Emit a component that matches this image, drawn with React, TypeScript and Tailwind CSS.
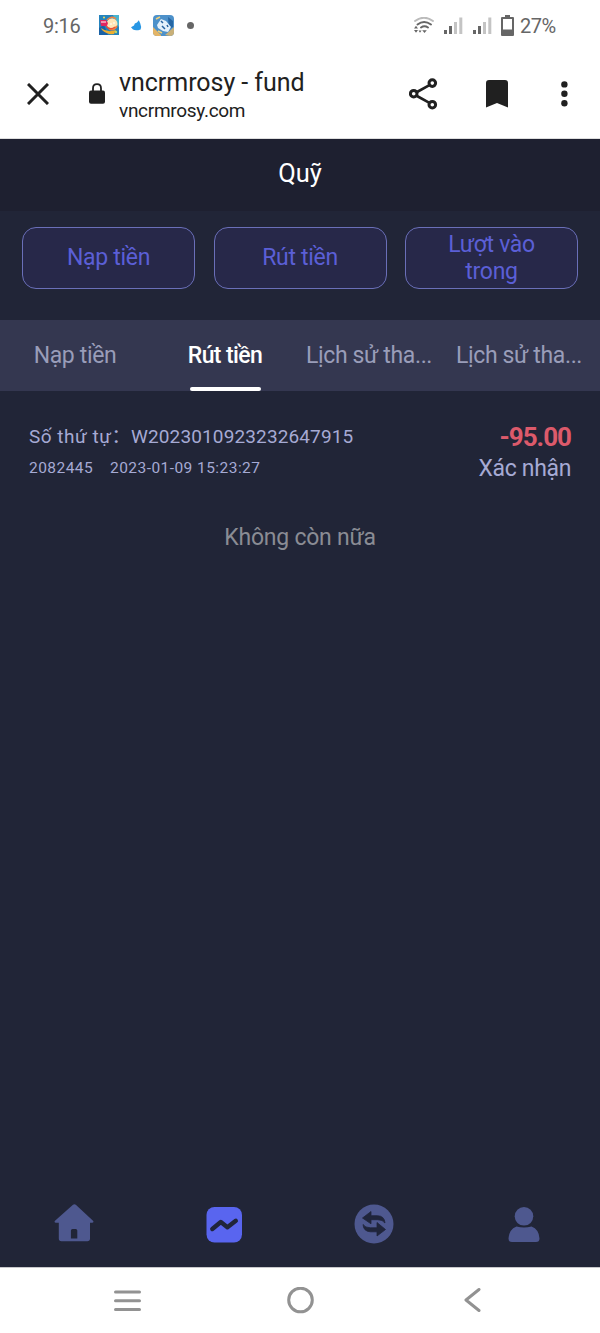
import React from 'react';

interface ActionButton {
  id: string;
  label: string;
}

interface Tab {
  id: string;
  label: string;
  active: boolean;
}

interface FundRecord {
  orderNo: string;
  userId: string;
  createdAt: string;
  amount: string;
  status: string;
}

const actions: ActionButton[] = [
  { id: 'deposit', label: 'Nạp tiền' },
  { id: 'withdraw', label: 'Rút tiền' },
  { id: 'transfer', label: 'Lượt vào trong' },
];

const tabs: Tab[] = [
  { id: 'deposit', label: 'Nạp tiền', active: false },
  { id: 'withdraw', label: 'Rút tiền', active: true },
  { id: 'history-in', label: 'Lịch sử tha...', active: false },
  { id: 'history-out', label: 'Lịch sử tha...', active: false },
];

const records: FundRecord[] = [
  {
    orderNo: 'W2023010923232647915',
    userId: '2082445',
    createdAt: '2023-01-09 15:23:27',
    amount: '-95.00',
    status: 'Xác nhận',
  },
];

const SignalIcon: React.FC = () => (
  <svg width="19" height="17" viewBox="0 0 19 17">
    <rect x="0" y="13" width="3" height="4" fill="#666" />
    <rect x="5" y="9" width="3" height="8" fill="#666" />
    <rect x="10" y="5" width="3" height="12" fill="#c4c4c4" />
    <rect x="15.3" y="0.5" width="3" height="16.5" fill="#c4c4c4" />
  </svg>
);

const StatusBar: React.FC = () => (
  <div className="flex h-[50px] shrink-0 items-center justify-between pr-[44px] pl-[43px] text-[20px] text-[#666]">
    <div className="flex items-center">
      <span className="w-[56px] pt-[2px] tracking-[-0.3px]">9:16</span>
      {/* puzzle game */}
      <svg width="20" height="20" viewBox="0 0 20 20">
        <rect width="20" height="20" fill="#2583bd" />
        <path d="M0 13 5 10 9 20H0Z" fill="#1a62a6" />
        <path d="M14 0h6v12l-4-5Z" fill="#48b4d0" />
        <path d="M2 13q6 5 15 2l-2 4q-7 1-12-4Z" fill="#edaf31" />
        <ellipse cx="13" cy="9" rx="5.5" ry="5.8" fill="#ffe6b5" />
        <path d="M8 5q5-5 9-1M10 14q5 2 8-3" stroke="#f2823d" strokeWidth="1.6" fill="none" />
        <path d="M1 5h6l2 3-1 3H2Z" fill="#e3265e" />
        <path d="M2 7h5M12 8v2m3-3v2" stroke="#fff" strokeWidth="1" />
        <path d="M7 11q4 5 9 1" stroke="#e8503b" strokeWidth="1.3" fill="none" />
        <circle cx="5" cy="2.5" r="1" fill="#f5dc57" />
        <circle cx="17" cy="17" r="1.2" fill="#b6d86c" />
      </svg>
      {/* bird */}
      <svg className="ml-[12px]" width="11" height="11" viewBox="0 0 11 11">
        <path d="M0 7.3 3 5.4 3.8 3.4 6 2.6 7.8 0.2 9.2 3.2Q10.8 7 9.6 9.4 5 11 2 9.6Z" fill="#2897e4" />
      </svg>
      {/* dragon game */}
      <svg className="ml-[11px]" width="21" height="21" viewBox="0 0 21 21">
        <rect width="21" height="21" rx="4" fill="#4d91ca" />
        <path d="M0 12 8 20v1H4q-4 0-4-4Z" fill="#e4b567" />
        <path d="M12 20 21 12v5q0 4-4 4Z" fill="#c9b078" />
        <path d="M15 2 20 6v6l-4 2Z" fill="#2766a3" />
        <path d="M4 10 8 4l5 2 5 6-3 5-5-1-5-3Z" fill="#e4f1fb" />
        <path d="m8 6 2 2m-1 3 3 3m2-4 1 2" stroke="#27639f" strokeWidth="1.5" />
        <path d="M3 4 7 2M5 16l4 2" stroke="#efcf78" strokeWidth="1.6" />
      </svg>
      <span className="ml-[13px] h-[7px] w-[7px] rounded-full bg-[#666]" />
    </div>
    <div className="flex items-center">
      <svg width="20" height="17" viewBox="0 0 20 17" fill="none" strokeLinecap="round">
        <path d="M1 4Q10-2.6 19 4" stroke="#bbb" strokeWidth="1.9" />
        <path d="M3.5 7.5Q10 2.5 17 7.5" stroke="#666" strokeWidth="2" />
        <path d="M7 10.5Q10.5 8 14 10.5" stroke="#666" strokeWidth="2" />
        <path d="m8.2 13.3h4.6L10.5 16Z" fill="#666" />
        <path d="M0 11.5 2 8.8l2 2.7ZM0 13h4l-2 2.7ZM4.6 13.5h3L6 15.7Z" fill="#666" />
      </svg>
      <span className="ml-[10px]">
        <SignalIcon />
      </span>
      <span className="ml-[10px]">
        <SignalIcon />
      </span>
      <svg className="ml-[9px]" width="13" height="21" viewBox="0 0 13 21">
        <path d="M4 0h5v2h3q1 0 1 1v17q0 1-1 1H1q-1 0-1-1V3q0-1 1-1h3ZM2 4v10.5h9V4Z" fill="#666" fillRule="evenodd" />
      </svg>
      <span className="ml-[6px] w-[36px] pt-[2px] tracking-[-0.5px] whitespace-nowrap">27%</span>
    </div>
  </div>
);

const BrowserBar: React.FC = () => (
  <div className="flex h-[89px] shrink-0 items-start border-b border-[#dedede] text-[#212121]">
    <svg className="mt-[33px] ml-[27px]" width="22" height="22" viewBox="0 0 22 22" stroke="#202020" strokeWidth="3">
      <path d="m1 1 20 20M21 1 1 21" />
    </svg>
    <svg className="mt-[33px] ml-[40px]" width="16" height="21" viewBox="0 0 16 21">
      <path d="M4 9V5.2Q4 1.2 8 1.2t4 4V9" fill="none" stroke="#212121" strokeWidth="1.8" />
      <rect y="7.6" width="16" height="13.2" rx="2" fill="#202020" />
    </svg>
    <div className="mt-[16px] ml-[14px] w-[290px] whitespace-nowrap">
      <p className="text-[25px] leading-[34px] tracking-[-0.05px]">vncrmrosy - fund</p>
      <p className="text-[19px] leading-[22px] tracking-[-0.3px]">vncrmrosy.com</p>
    </div>
    <svg className="mt-[28px]" width="30" height="32" viewBox="0 0 30 32" fill="none" stroke="#202020" strokeWidth="3">
      <path d="M8 14 20 7.4M8 18l12 6.6" strokeWidth="2.6" />
      <circle cx="4.7" cy="15.7" r="3.3" />
      <circle cx="23.3" cy="5.1" r="3.3" />
      <circle cx="23.3" cy="26.7" r="3.3" />
    </svg>
    <svg className="mt-[30px] ml-[47px]" width="22" height="29" viewBox="0 0 22 29">
      <path d="M0 3q0-3 3-3h16q3 0 3 3v24.6L11 22.9 0 27.6Z" fill="#202020" />
    </svg>
    <svg className="mt-[30px] ml-[52px]" width="8" height="27" viewBox="0 0 8 27" fill="#202020">
      <circle cx="4.4" cy="4.4" r="3.2" />
      <circle cx="4.4" cy="13.8" r="3.2" />
      <circle cx="4.4" cy="23.2" r="3.2" />
    </svg>
  </div>
);

const TabBar: React.FC = () => (
  <nav className="grid h-[72px] shrink-0 grid-cols-4 pt-[8px]">
    <div className="flex justify-center">
      <svg className="-ml-[2px] h-[40px] w-[40px]" viewBox="0 0 40 40">
        <path
          d="M19 1.8q1.4-1.2 2.8 0L39 17.7q1.3 1.8-1 2.1H36v15.7q0 2.7-2.7 2.7H7.5q-2.7 0-2.7-2.7V19.8H2q-2.3-.3-1-2.1ZM18.5 26q-1.6 0-1.6 1.6v7.9h6.4v-7.9q0-1.6-1.6-1.6Z"
          fill="#4e588f"
          fillRule="evenodd"
        />
      </svg>
    </div>
    <div className="flex justify-center pt-[4px]">
      <svg className="-ml-[2px] h-[36px] w-[36px]" viewBox="0 0 36 36">
        <rect x="0.5" width="35.5" height="35.5" rx="8" fill="#5965ef" />
        <path d="m6.3 22 8.5-7 6.6 5.2 8.4-6.4" fill="none" stroke="#20253b" strokeWidth="4.4" strokeLinecap="round" strokeLinejoin="round" />
      </svg>
    </div>
    <div className="flex justify-center pt-[1px]">
      <svg className="-ml-[2px] h-[40px] w-[40px]" viewBox="0 0 40 40">
        <circle cx="20" cy="20" r="19.5" fill="#4e588f" />
        <path
          d="M8.5 14 17 7.5v4.2h6.5q7 .3 7.5 7.3-2.2-3.3-7.5-3.3H17v4.1ZM31.5 25.5 23 32v-4.2h-6.5q-7-.3-7.5-7.3 2.2 3.3 7.5 3.3H23v-5.3Z"
          fill="#20253b"
          stroke="#20253b"
          strokeWidth="0.8"
        />
      </svg>
    </div>
    <div className="flex justify-center pt-[4px]">
      <svg className="-ml-[2px] h-[36px] w-[32px]" viewBox="0 0 32 36" fill="#4e588f">
        <circle cx="16" cy="9.3" r="9.3" />
        <path d="M8.5 19.5q7.5 1.8 15 0 7.5 2.8 8 12 0 3.5-3.5 3.5H4q-3.5 0-3.5-3.5.5-9.2 8-12Z" />
      </svg>
    </div>
  </nav>
);

const SystemNav: React.FC = () => (
  <div className="flex h-[66px] shrink-0 items-center justify-between border-t border-[#c8c8cc] bg-white pr-[119px] pl-[114px]">
    <svg width="27" height="22" viewBox="0 0 27 22" stroke="#929292" strokeWidth="3" strokeLinecap="round">
      <path d="M1.5 2h24M1.5 10.7h24M1.5 19.4h24" />
    </svg>
    <svg className="-ml-[5px]" width="27" height="27" viewBox="0 0 27 27" fill="none" stroke="#929292" strokeWidth="3">
      <circle cx="13.5" cy="13" r="11.8" />
    </svg>
    <svg width="17" height="25" viewBox="0 0 17 25" fill="none" stroke="#929292" strokeWidth="3" strokeLinecap="round" strokeLinejoin="round">
      <path d="M15 1.5 2 12 15 22.5" />
    </svg>
  </div>
);

const App: React.FC = () => {
  return (
    <div className="flex h-[1333px] w-[600px] flex-col overflow-hidden bg-white font-[Roboto,sans-serif]">
      <StatusBar />
      <BrowserBar />
      <main className="flex flex-1 flex-col bg-[#212537]">
        <header className="flex h-[72px] shrink-0 items-center justify-center bg-[#1e2030] pb-[4px]">
          <h1 className="text-[25.5px] leading-[30px] text-white">Quỹ</h1>
        </header>

        <div className="flex h-[109px] shrink-0 justify-between px-[22px] pt-[16px]">
          {actions.map((action) => (
            <button
              key={action.id}
              className="flex h-[62px] w-[173px] items-center justify-center rounded-[14px] border border-[#6a6fb8] bg-[#272849] px-[30px] pb-px text-[23px] leading-[27px] tracking-[-0.3px] text-[#5b5fd6]"
            >
              {action.label}
            </button>
          ))}
        </div>

        <div className="grid h-[71px] shrink-0 grid-cols-4 bg-[#343750]">
          {tabs.map((tab) => (
            <div
              key={tab.id}
              className={
                tab.active
                  ? 'flex flex-col items-center text-[23px] tracking-[-0.6px] whitespace-nowrap font-medium text-white'
                  : 'flex flex-col px-[6px] text-center text-[23px] tracking-[-0.36px] whitespace-nowrap text-[#999db9]'
              }
            >
              <span className={tab.id.startsWith('history') ? 'pr-[12px] leading-[72px]' : 'leading-[72px]'}>{tab.label}</span>
              {tab.active && <span className="-mt-[5px] h-[4px] w-[71px] shrink-0 rounded-full bg-white" />}
            </div>
          ))}
        </div>

        {records.map((record) => (
          <div key={record.orderNo} className="flex justify-between pt-[30px] pr-[29px] pl-[29px] text-[#a6aad4]">
            <div className="whitespace-nowrap">
              <p className="flex h-[32px] text-[19px] leading-[32px]">
                <span className="w-[102px] font-[Roboto,'Noto_Sans_CJK_SC',sans-serif] tracking-[0.5px]" lang="zh-CN">
                  Số thứ tự：
                </span>
                <span className="tracking-[0.13px]">{record.orderNo}</span>
              </p>
              <p className="flex text-[15.5px] leading-[30px] tracking-[0.45px]">
                <span className="w-[81px]">{record.userId}</span>
                <span>{record.createdAt}</span>
              </p>
            </div>
            <div className="text-right">
              <p className="text-[26px] leading-[32px] font-bold tracking-[-1px] text-[#dc5a6b]">{record.amount}</p>
              <p className="pt-px text-[23px] leading-[30px] tracking-[-0.35px]">{record.status}</p>
            </div>
          </div>
        ))}

        <p className="mt-[39px] text-center text-[23px] leading-[30px] tracking-[-0.25px] text-[#8a8c94]">Không còn nữa</p>

        <div className="flex-1" />
        <TabBar />
      </main>
      <SystemNav />
    </div>
  );
};

export default App;
